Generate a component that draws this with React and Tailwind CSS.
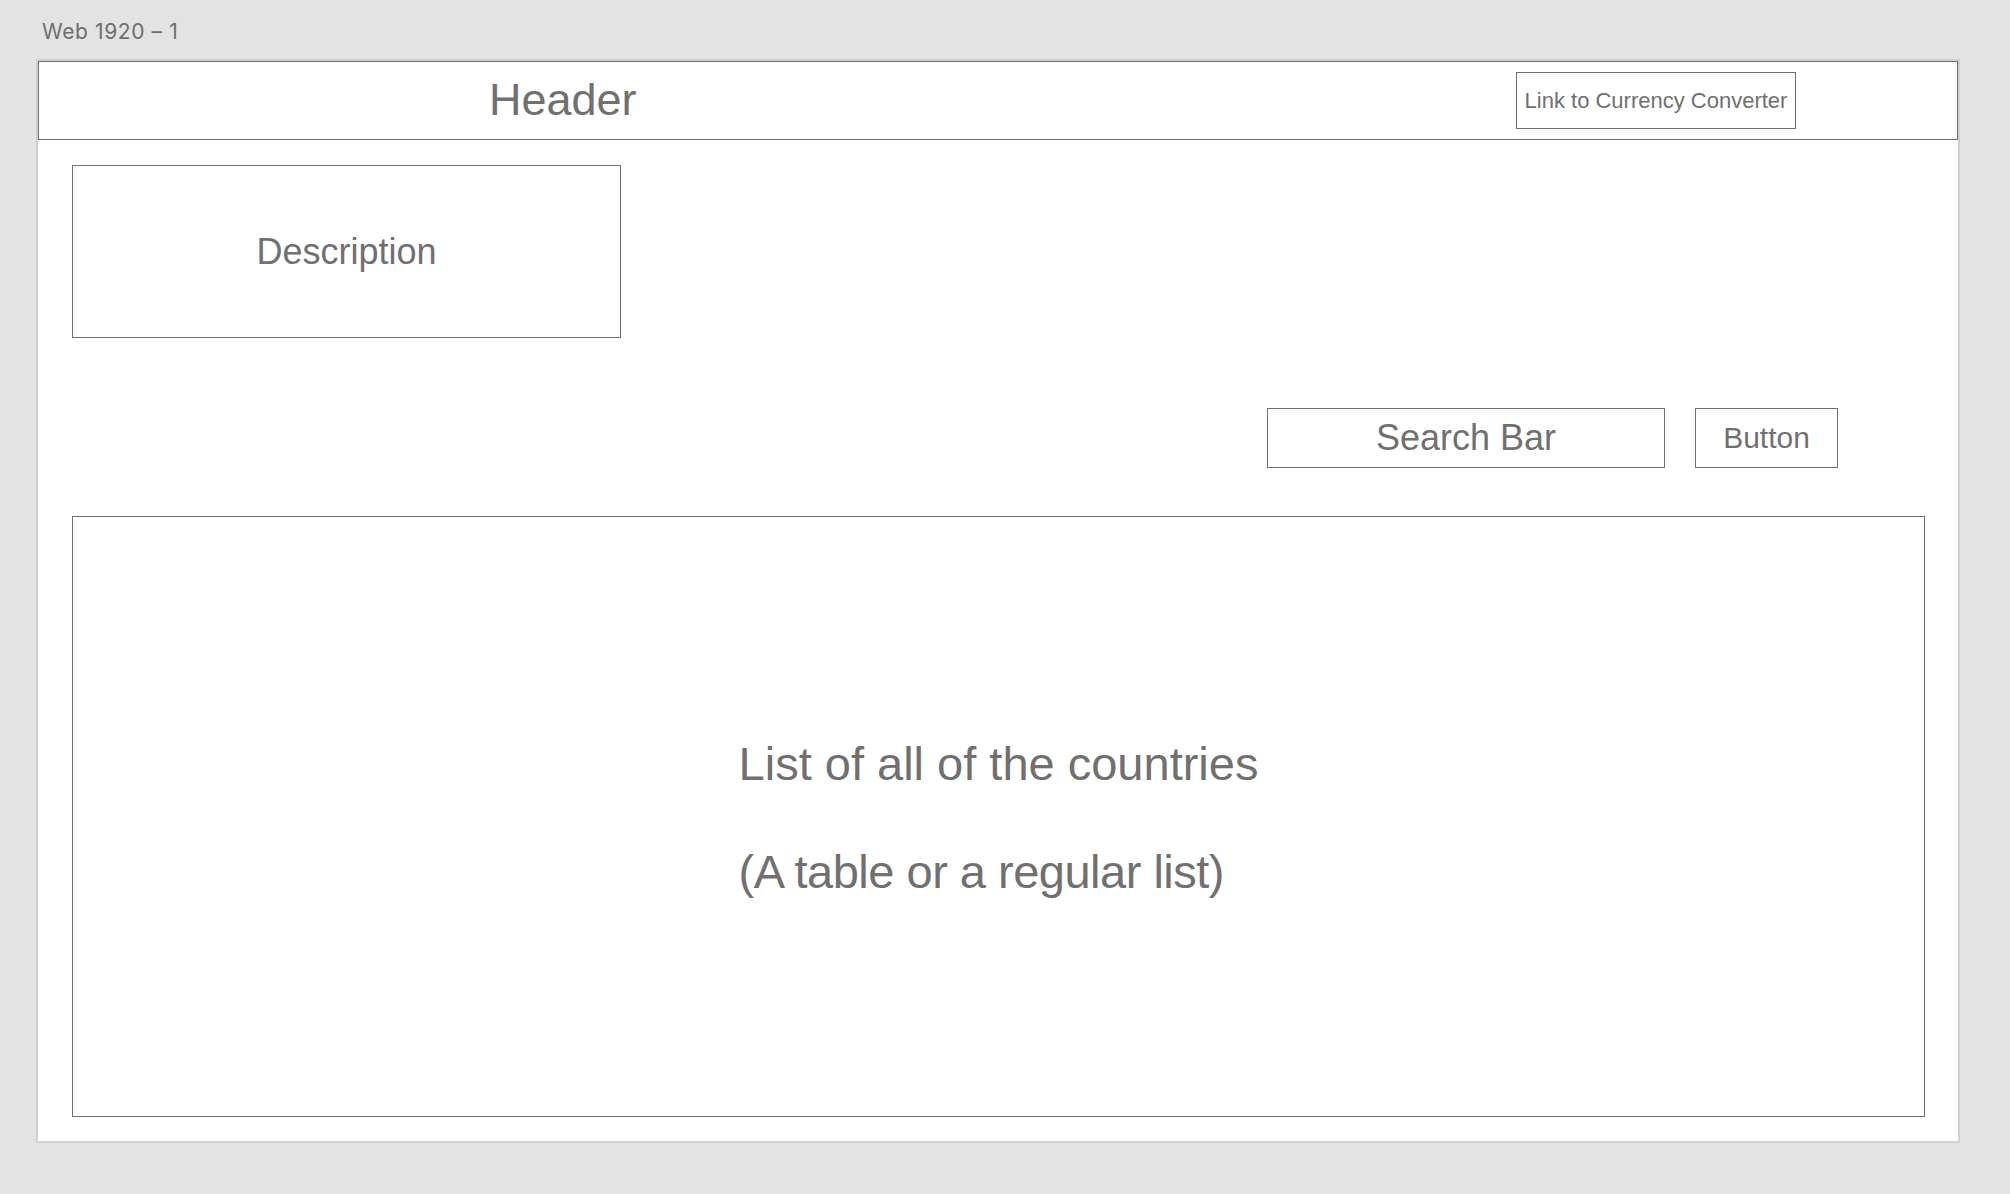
export default function App() {
  return (
    <div className="w-[2010px] h-[1194px] bg-[#e3e3e3] font-['Liberation_Sans',Arial,sans-serif] text-[#707070]">
      <div className="h-[59px] pl-[42px] pt-[19px] font-['Inter',sans-serif] text-[21px] leading-[25px] tracking-[0.6px] text-[#6e6e6e]">
        Web 1920 – 1
      </div>
      <div className="ml-[36px] w-[1924px] border-2 border-[#d0d0d0] bg-white">
        <div className="h-[79px] border border-[#707070] flex items-center justify-between pl-[450px] pr-[161px]">
          <span className="text-[45px] leading-[45px] mb-[2px]">Header</span>
          <div className="w-[280px] h-[57px] border border-[#707070] flex items-center justify-center text-[22px] leading-none">
            Link to Currency Converter
          </div>
        </div>
        <div className="pl-[34px] pr-[33px] pb-[24px]">
          <div className="mt-[25px] w-[549px] h-[173px] border border-[#707070] flex items-center justify-center text-[36px] leading-none">
            Description
          </div>
          <div className="mt-[70px] flex justify-end gap-[30px] pr-[87px]">
            <div className="w-[398px] h-[60px] border border-[#707070] flex items-center justify-center text-[36px] leading-none">
              Search Bar
            </div>
            <div className="w-[143px] h-[60px] border border-[#707070] flex items-center justify-center text-[30px] leading-none">
              Button
            </div>
          </div>
          <div className="mt-[48px] h-[601px] border border-[#707070] flex items-center justify-center">
            <div className="text-[47px] leading-[54px] pt-[3px]">
              <p>List of all of the countries</p>
              <p className="mt-[54px] tracking-[-0.5px]">(A table or a regular list)</p>
            </div>
          </div>
        </div>
      </div>
    </div>
  );
}
